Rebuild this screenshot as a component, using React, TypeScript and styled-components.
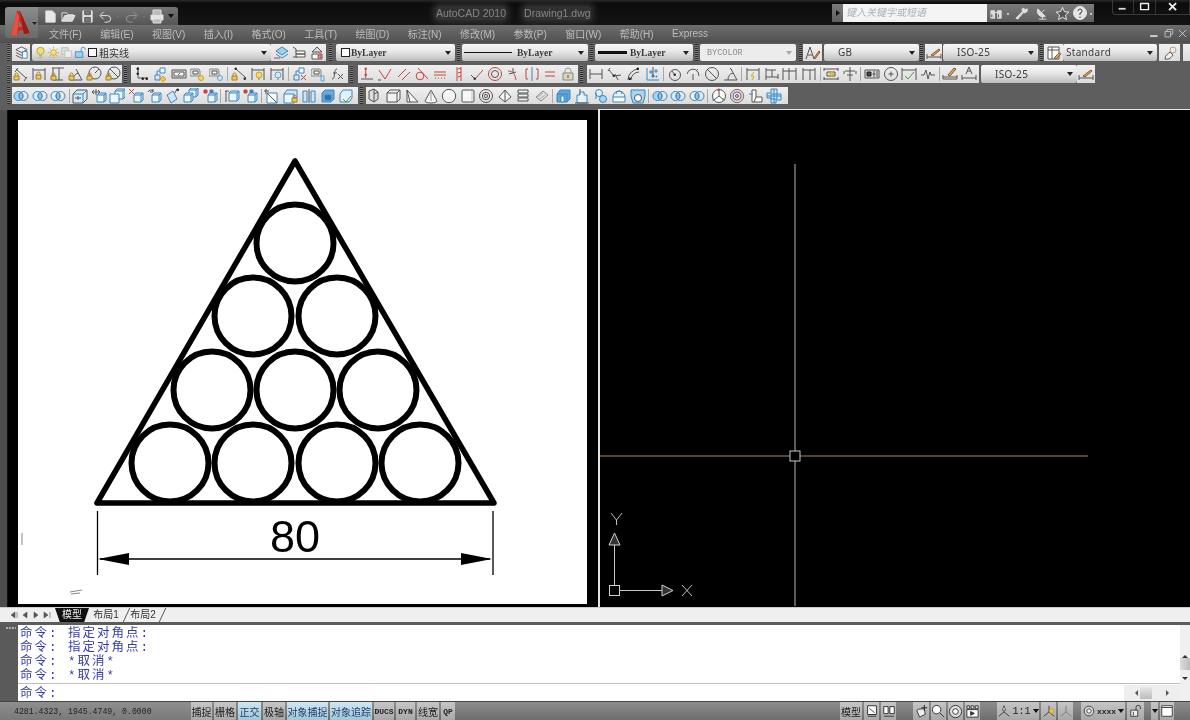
import React from "react";
import styled, { createGlobalStyle } from "styled-components";

const Global = createGlobalStyle`
  html, body { margin: 0; padding: 0; background: #000; }
  body { width: 1190px; height: 720px; overflow: hidden; font-family: "Liberation Sans", "Noto Sans CJK SC", sans-serif; }
`;

type P = [string, string, string?];
const dk = "#555", bl = "#3a86c0", rd = "#c8453c", yw = "#a87f24", gn = "#4aa03c", lb = "#cfe6f7";
const C = (x: number, y: number, r: number) => `M${x - r} ${y}a${r} ${r} 0 1 0 ${2 * r} 0a${r} ${r} 0 1 0 ${-2 * r} 0z`;
const lock = (x: number, y: number): P[] => [[yw, `M${x + 1} ${y}v-1.5a1.5 1.5 0 0 1 3 0v1.5`], [yw, `M${x} ${y}h5v4h-5z`, "#ecc862"]];
const box = (x: number, y: number, s = 7): P[] => [[bl, `M${x} ${y}l2-2h${s}v${s}l-2 2`, lb], [bl, `M${x} ${y}h${s}v${s}h-${s}zM${x + s} ${y}l2-2`, "#eef7fd"]];
const rings = (f: string): P[] => [[bl, C(5.5, 8, 4.5), f], [bl, C(10.5, 8, 4.5), "none"], [bl, "M8 4.3a4.5 4.5 0 0 1 0 7.4a4.5 4.5 0 0 1 0-7.4z", "#8cc4ea"]];
const dots = (a: [number, number][], col = "#333"): P => [col, a.map(([x, y]) => `M${x} ${y}h1.4v1.4h-1.4z`).join(""), col];
const ruler = (x: number): P[] => [["#888", `M${x} 3h8l1 2v5h-10v-5z`, "#ddd"], [dk, `M${x + 2} 5h5v3h-5z`, "#fff"]];

const r2a: P[][] = [
  [[dk, "M3 3l10 9M2 6l3-4M11 15l3-4"], ...lock(1, 10)],
  [[dk, "M2 2v12M14 2v12M2 4h12"], ...lock(5, 9)],
  [[dk, "M2 2h12M9 2v12M3 14h10M3 2v10"], ...lock(1, 10)],
  [[dk, "M8 3l6 11M2 14h12M5 14a8 8 0 0 1 5-7"], ...lock(1, 10)],
  [[dk, C(9, 7, 6)], [dk, "M9 7l4-4"], ...lock(1, 10)],
  [[dk, C(9, 7, 6)], [dk, "M5 3l8 8"], ...lock(1, 10)],
];
const r2b: (P[] | null)[] = [
  [[dk, "M5 1v11h10"], dots([[4, 2], [4, 7], [9, 12], [13, 12]], "#222"), [rd, "M4 5h2"]],
  [[bl, "M3 9h5v5h-5z"], [bl, "M8 2h5v5h-5z", "#fff"], [bl, "M5 9v-4h3"], ["#d9a21f", "M11 10l3 3-3 3-3-3z", "#f0c54a"]],
  [[dk, "M1 4h14v8h-14z", "#ddd"], [dk, "M3 6h10v4h-10z", "#fff"], [dk, "M9 7l-2 2"]],
  [...ruler(1), ["#c9a22c", C(11, 12, 2.5), "#f3d766"]],
  [...ruler(1), ["#6aa0c8", C(11, 12, 2.5), "#cfe6f7"]],
  null,
  [[dk, "M5 3l10 9"], dots([[4, 2], [13, 12]]), ...lock(1, 10)],
  [[dk, "M2 2v12M14 2v12M2 4h12"], ["#c9a22c", C(9, 9, 3), "#f5da60"], ["#888", "M8 13h2"]],
  [[dk, "M2 2v12M14 2v12M2 4h12"], ["#6aa0c8", C(9, 9, 3), "#d3e8f7"], ["#888", "M8 13h2"]],
  null,
  [[bl, "M2 9h5v5h-5z"], [bl, "M7 2h5v5h-5z", "#fff"], [bl, "M4 9v-4h3"], [rd, "M9 9l5 5M14 9l-5 5"]],
  [...ruler(1), ["#6aa0c8", "M10 10h3v5h-3z", "#cfe6f7"]],
  [[dk, "M7 3c-2 0-2 2-2.500 5s-.5 5-2.500 5M3 7h4M8 8l5 5M13 8l-5 5"]],
];
const r2c: P[][] = [
  [[dk, "M2 13h12"], dots([[6, 2], [6, 8]], rd), [rd, "M6.700 4v8"]],
  [[rd, "M2 4l6 9 6-10"], [dk, "M1 14h3"]],
  [[rd, "M2 11l8-8M6 14l8-8"]],
  [[rd, C(6, 10, 3.800)], [rd, "M4 2l10 11"]],
  [[rd, "M2 6h12M2 9h12"], [rd, "M3 12h1M6 12h1M9 12h1M12 12h1"]],
  [[rd, "M6 1v14M10 1v14M7 3l3-1M7 7l3-1M7 11l3-1"]],
  [[dk, "M6 13l-4-4"], [rd, "M6 13l8-9"], dots([[5, 12]])],
  [[rd, C(8, 8, 6.500)], [dk, C(8, 8, 3.500)]],
  [[rd, "M2 5c5 0 7 3 8 9"], [dk, "M7 2v4M3 8l7-2"]],
  [[rd, "M4 3h-2v10h2M12 3h2v10h-2"], [bl, "M8 1v14"]],
  [[rd, "M3 6h10M3 10h10"]],
  [["#999", "M5 7v-2a3 3 0 0 1 6 0v2"], ["#888", "M3 7h10v7h-10z", "#ddd5b8"], [dk, "M8 9v3"]],
];
const r2d: (P[] | null)[] = [
  [[dk, "M2 3v10M14 3v10M2 8h12"]],
  [[dk, "M2 4l5 6 7-1"], [dk, "M3 2l-2 3M8 8l3 6"], dots([[6, 9]])],
  [[dk, "M2 14a11 11 0 0 1 11-11"], [dk, "M5 14a8 8 0 0 1 8-8"], dots([[3, 12], [11, 2]], "#222")],
  [[bl, "M3 2v12h12"], [bl, "M6 5h2v2h-2zM11 4h2v2h-2zM8 9h2v2h-2zM12 10h1v1h-1z"], [dk, "M9 1v10"]],
  null,
  [[dk, C(8, 9, 5.500)], [dk, "M8 9l-3-4"], dots([[7, 8]])],
  [[dk, "M2 8a6 6 0 0 1 11-2l1 4"], [dk, "M8 8v6M11 5l2-2"]],
  [[dk, C(8, 8, 6.500)], [dk, "M3 3l10 10"]],
  [[dk, "M1 14h13M8 3l6 11M5 14a7 7 0 0 1 5-7M7 2l2 2"]],
  null,
  [[dk, "M2 2v12M14 2v12M2 4h12"], ["#d9a21f", "M9 6l-3 4h3l-2 4", "none"]],
  [[dk, "M2 2v12M2 4h10M2 11h12M14 8v5M8 4v7"]],
  [[dk, "M1 2v12M7 2v12M14 2v12M1 5h13"]],
  [[dk, "M2 2v12M14 2v12M2 4h12M9 4v10"]],
  null,
  [[dk, "M1 2v3M15 2v3M1 14v-3M15 14v-3M1 3h14M1 13h14M4 6h8v4h-8z"], ["#c9a22c", "M7 6h3v4h-3z", "#f0c54a"]],
  [[dk, "M8 1v14M3 5h10M5 9h6M2 5v3M14 5v3"]],
  null,
  [[dk, "M1 4h14v8h-14z", "#ddd"], ["#222", "M3 6h4v4h-4z", "#444"], [dk, "M10 5v6M8.500 8h3M13 5v6"]],
  [[dk, C(8, 8, 6.500)], [dk, "M8 5.500v5M5.500 8h5"]],
  [[dk, "M1 2v12M15 2v12M1 4h14"], [gn, "M4 10l3 3 6-7", "none"]],
  [[dk, "M1 9h3l2-5 2 9 2-7 1 3h4"]],
  null,
  [[dk, "M1 9v4h14v-4M1 11h14"], ["#8a5a26", "M6 9l6-7 2 1-6 7z", "#d7a76c"]],
  [[dk, "M1 9v5M15 9v5M1 12h14"], [dk, "M5 8l3-7 3 7M6 5h4"]],
  [[dk, "M2 2v12M14 2v12M2 4h12M7 9h5v4h-5z"], [bl, "M8 10l3 2"]],
];

const r3a: (P[] | null)[] = [
  rings("#a9d4f2"), rings("#d8ebf8"), rings("#e8f2f8"), null,
  [[dk, "M1 6l4-4h10v9l-4 4h-10z", "#d5ebfa"], [bl, "M1 6h10v9M11 6l4-4"], [dk, "M3 10h6M6 8v4"]],
  [[dk, "M5 1v6M2 4h6M3 2l-2 2 2 2M7 2l2 2-2 2"], ...box(6, 7)],
  [...box(6, 3, 8), [bl, "M1 6h9v9h-9z", "#eef7fd"]],
  [[rd, "M1 1l5 5M6 1l-5 5"], ...box(6, 7)],
  [[dk, "M2 4a3 3 0 0 1 5-1M7 1v3h-3"], ...box(6, 7)],
  [[bl, "M2 7l6-4 4 8-6 4z", lb], [dk, "M12 1l-2 4M12 1l2 2"], dots([[12, 1]])],
  [...box(6, 2, 7), ...box(1, 7, 7)],
  [[rd, "M2 2h3v3h-3z", rd], [bl, "M8 2h3v3h-3z", bl], ...box(6, 7)],
  null,
  [[dk, "M2 3v11M1 3h4"], ...box(5, 5, 8)],
  [[rd, "M2 2h3v3h-3z", rd], [bl, "M8 2h3v3h-3z", bl], ...box(6, 7)],
  null,
  [[dk, "M2 1v5M0 3h5"], [bl, "M3 5h10v10h-10z", "#fff"], [dk, "M3 5l10 10"]],
  [[bl, "M1 6l3-4h10v8h-3", lb], [bl, "M1 6h10v9h-10z", "#eef7fd"], ...lock(9, 10)],
  [[bl, "M2 3h4v11h-4z", lb], [bl, "M10 3h4v11h-4z", lb], [dk, "M8 1v14"]],
  [[bl, "M2 5l3-3h9v9l-3 3h-9z", "#6aa8d8"], [bl, "M5 7h6v5h-6z", "#2f6fa8"]],
  [[bl, "M5 2h9v8l-3 4h-9v-8z", "#e4f2fc"], [gn, "M5 11l3 3 5-6"]],
];
const r3b: (P[] | null)[] = [
  [[dk, "M2 3l5-2 4 3v7l-4 3-5-3z", "#ddd"], [dk, "M7 1v13M11 4l-4 2"]],
  [[dk, "M1 5l3-3h10v9l-3 3h-10z", "#f2f2f2"], [dk, "M1 5h10v9M11 5l3-3"]],
  [[dk, "M3 2l11 12h-11z", "#f6f6f6"], [dk, "M3 2l3 12"]],
  [[dk, "M8 2l6 11a6 2 0 0 1-12 0z", "#f6f6f6"], ["#999", "M8 2v11"]],
  [[dk, C(8, 8, 6.700), "#f4f4f4"], ["#fff", C(6, 6, 2), "#fff"]],
  [[dk, "M3 2h10a1 1 0 0 1 1 1v10a1 1 0 0 1-1 1h-10a1 1 0 0 1-1-1v-10a1 1 0 0 1 1-1z", "#f7f7f7"], ["#bbb", "M12 3v10"]],
  [[dk, C(8, 8, 6.500)], [dk, C(8, 8, 3.700), "#ddd"], [dk, C(8, 8, 1.500), "#fff"]],
  [[dk, "M8 2l6 7-6 5-6-5z", "#f4f4f4"], [dk, "M8 2v12"]],
  [[dk, "M3 2h10v3h-10zM3 6h10v3h-10zM3 10h10v3h-10z", "#eee"]],
  [["#888", "M2 9l7-6 5 4-7 6z", "#e2e2e2"], ["#aaa", "M4 9l5-4M6 11l5-4"]],
  null,
  [[bl, "M1 6l3-4h10v9l-3 3h-10z", "#5ea7dc"], [bl, "M5 8h3v6h-3z", "#fff"], [bl, "M1 6h10v8"]],
  [[dk, "M6 1v6"], [bl, "M3 7h3v-3h4v3h3v8h-10z", "#e4f2fc"], [dk, "M1 15h14"]],
  [[bl, C(6, 5, 3.500), "#e4f2fc"], [bl, C(10, 11, 3.500), "#a9d4f2"], [bl, "M3 5v6"]],
  [[bl, "M2 9a6 6 0 0 1 12 0", "#e4f2fc"], [bl, "M2 9h12v5h-12z", "#fff"], [bl, "M5 6a3 3 0 0 1 6 0"]],
  [[bl, "M1 2h14v6l-2 7h-10l-2-7z", "#a9d4f2"], [dk, C(8, 10, 3.500), "#fff"]],
  null,
  rings("#a9d4f2"), rings("#d8ebf8"), rings("#e8f2f8"), null,
  [[dk, C(8, 8, 6.500), "#fff"], [dk, "M8 8v-6M8 8l-5 4M8 8l5 4"], dots([[7, 1]], rd), dots([[2, 11]], bl), dots([[12, 11]], gn)],
  [["#a06a6a", C(8, 8, 6.700), "#e6c9c0"], [bl, C(8, 8, 4), "#cfe6f7"], [rd, C(8, 8, 1.500), "#f2b8a8"]],
  [[dk, "M4 2h4v7h6v5h-10z", "#fff"], [bl, "M1 6h4"], [dk, "M8 9l-2 5"]],
  [[bl, "M5 1h6v5h4v6h-5v3h-5v-5h-4v-5h4z", lb], [bl, "M5 6h6v5h-6zM8 1v14M1 8h14"]],
];

const Icon = ({ d, size = 16, sw = 1 }: { d: P[]; size?: number; sw?: number }) => (
  <svg width={size} height={size} viewBox="0 0 16 16">
    {d.map(([s, p, f], i) => <path key={i} d={p} stroke={s} fill={f ?? "none"} strokeWidth={sw} strokeLinejoin="round" />)}
  </svg>
);

const Root = styled.div`
  width: 1190px; height: 720px; display: flex; flex-direction: column; overflow: hidden;
  position: relative; filter: blur(0.4px); background: #5a5a5a;
`;
const TitleBar = styled.header`
  height: 25px; box-sizing: border-box; display: flex; align-items: flex-start;
  background: linear-gradient(#2a2a2a 0, #0c0c0c 3px, #141414 100%);
`;
const AppButton = styled.div`
  position: absolute; left: 5px; top: 7px; width: 33px; height: 31px; border-radius: 3px 0 0 3px;
  background: linear-gradient(#8c8c8c, #6a6a6a); display: flex; align-items: center; justify-content: center;
`;
const Qat = styled.div`
  margin-left: 38px; margin-top: 7px; width: 140px; height: 18px; box-sizing: border-box; padding-left: 3px; flex: none;
  display: flex; align-items: center; background: linear-gradient(#757575, #555);
  border-radius: 0 3px 0 0;
`;
const QatItem = styled.span<{ $w: number }>`
  width: ${(p) => p.$w}px; height: 18px; flex: none; display: flex; align-items: center; justify-content: center;
`;
const TitleText = styled.div`
  margin-left: 258px; margin-top: 6px; display: flex; gap: 18px; font-size: 10.500px; line-height: 14px; color: #858585;
  font-family: "Liberation Sans", sans-serif; flex: none;
  span { background: rgba(90, 90, 90, 0.45); box-shadow: 0 0 6px 3px rgba(90, 90, 90, 0.45); border-radius: 3px; }
`;
const SearchBox = styled.div`
  margin-left: auto; margin-top: 4px; width: 262px; height: 18px; box-sizing: border-box; background: linear-gradient(#7a7a7a, #606060);
  display: flex; align-items: center; padding-left: 4px; color: #eee; flex: none;
`;
const RightTri = styled.span`
  width: 0; height: 0; border-left: 4px solid #111; border-top: 3.500px solid transparent; border-bottom: 3.500px solid transparent; margin-right: 3px; flex: none;
`;
const SearchInput = styled.div`
  width: 144px; height: 18px; flex: none; background: #f4f4f4; color: #a8b0b8; font-size: 10px; line-height: 18px; padding-left: 3px; box-sizing: border-box; font-style: italic;
`;
const SearchIcon = styled.span<{ $w: number }>`
  width: ${(p) => p.$w}px; flex: none; display: flex; align-items: center; justify-content: center; font-size: 7px; color: #ddd;
`;
const WinControls = styled.div`
  margin-left: 18px; width: 78px; height: 15px; display: flex; flex: none; border: 1px solid #3a3a3a; border-top: 0; border-right: 0; border-radius: 0 0 0 4px; box-sizing: border-box;
`;
const WinBtn = styled.span<{ $w: number }>`
  width: ${(p) => p.$w}px; display: flex; align-items: center; justify-content: center; color: #ddd; border-right: 1px solid #333; box-sizing: border-box;
`;
const MenuBar = styled.nav`
  height: 18px; padding-left: 49px; padding-right: 2px; padding-bottom: 1px; box-sizing: border-box; display: flex; align-items: center; gap: 18.400px; font-size: 10px; color: #bcbcbc;
  background: linear-gradient(#6e6e6e, #4f4f4f);
`;
const MenuEnd = styled.span`
  margin-left: auto; display: flex; gap: 3px; align-items: center;
`;
const ToolArea = styled.section`
  height: 67px; box-sizing: border-box; padding-top: 1px; background: #5e5e5e; display: flex; flex-direction: column; gap: 4px;
`;
const ToolRow = styled.div<{ $h: number }>`
  height: ${(p) => p.$h}px; padding-left: 5px; display: flex; align-items: stretch;
`;
const Grip = styled.span<{ $l?: number; $r?: number }>`
  width: 3px; margin: 0 ${(p) => p.$r ?? 2}px 0 ${(p) => p.$l ?? 2}px;
  background: repeating-linear-gradient(0deg, #2e2e2e 0 1px, #7c7c7c 1px 2px);
`;
const Panel = styled.div<{ $w: number; $ml?: number }>`
  width: ${(p) => p.$w}px; margin-left: ${(p) => p.$ml ?? 0}px; box-sizing: border-box; display: flex; align-items: center; flex: none;
  background: linear-gradient(#f0f0f0, #dcdcdc);
`;
const Slot = styled.span<{ $p: number }>`
  width: ${(p) => p.$p}px; flex: none; display: flex; align-items: center; justify-content: center;
`;
const Sep = styled.span`
  width: 1px; height: 14px; margin: 0 1.250px; background: #a8a8a8; flex: none;
`;
const Combo = styled.div<{ $w: number; $ml?: number; $pl?: number; $muted?: boolean; $gap?: number }>`
  width: ${(p) => p.$w}px; margin-left: ${(p) => p.$ml ?? 0}px; padding-left: ${(p) => p.$pl ?? 4}px; box-sizing: border-box; flex: none;
  position: relative; display: flex; align-items: center; gap: ${(p) => p.$gap ?? 0}px; border-radius: 2px;
  background: ${(p) => (p.$muted ? "#ececec" : "linear-gradient(#f8f8f8 0%, #e6e6e6 45%, #bdbdbd 100%)")};
  color: ${(p) => (p.$muted ? "#8f8f8f" : "#333")};
  font-size: 10.500px;
  &::after {
    content: ""; position: absolute; right: 4px; top: 50%; margin-top: -2px;
    border-top: 4px solid ${(p) => (p.$muted ? "#aaa" : "#222")}; border-left: 3.500px solid transparent; border-right: 3.500px solid transparent;
  }
`;
const SerifLabel = styled.span`
  font-family: "Liberation Serif", serif; font-weight: bold; font-size: 9.500px; color: #3a3a3a;
`;
const MonoLabel = styled.span`
  font-family: "Liberation Mono", monospace; font-size: 8.500px; color: #8f8f8f;
`;
const ComboText = styled.span`
  font-family: "Noto Sans", sans-serif; font-size: 10px; line-height: 13px; color: #3c3c3c; letter-spacing: 0.300px;
`;
const LayerName = styled.span`
  font-size: 10px; color: #333; margin-left: 2px;
`;
const LineSample = styled.span<{ $w: number; $t: number }>`
  width: ${(p) => p.$w}px; height: ${(p) => p.$t}px; background: #111; flex: none;
`;
const ColorSquare = styled.span<{ $ml?: number }>`
  width: 7px; height: 7px; border: 1px solid #222; background: #fff; flex: none; margin-left: ${(p) => p.$ml ?? 0}px;
`;
const Viewports = styled.main`
  height: 497px; display: flex; background: #000; padding-left: 8px; position: relative;
`;
const Gutter = styled.span`
  position: absolute; left: 0; top: 0; bottom: 0; width: 8px; background: #4d4d4d; border-right: 1px solid #111; box-sizing: border-box;
`;
const LeftView = styled.div`
  width: 590px; box-sizing: border-box; padding: 10px 11px 0 10px; background: #000; flex: none;
`;
const RightView = styled.div`
  flex: 1; background: #000; border-left: 2px solid #e4e4e4; border-top: 1px solid #e4e4e4; margin-top: -1px; overflow: hidden;
`;
const Sheet = styled.svg`
  display: block; background: #fff;
`;
const ModelSpace = styled.svg`
  display: block;
`;
const TabBar = styled.div`
  height: 15px; display: flex; align-items: center; background: #efefef; padding-left: 8px; font-size: 10px; color: #333; border-top: 1px solid #ccc; box-sizing: border-box;
`;
const NavBtn = styled.span`
  width: 11px; height: 11px; display: flex; align-items: center; justify-content: center; flex: none;
`;
const Tab = styled.span<{ $active?: boolean; $w: number; $ml?: number }>`
  width: ${(p) => p.$w}px; margin-left: ${(p) => p.$ml ?? 0}px; flex: none; text-align: center; position: relative;
  color: ${(p) => (p.$active ? "#eee" : "#333")}; background: ${(p) => (p.$active ? "#111" : "transparent")};
  clip-path: ${(p) => (p.$active ? "polygon(0 0, 100% 0, 86% 100%, 14% 100%)" : "none")};
  line-height: 14px;
`;
const Slash = styled.span`
  width: 1px; height: 14px; background: #555; transform: skewX(-25deg); flex: none; margin: 0 1px 0 4px;
`;
const CmdDivider = styled.div`
  height: 3px; background: #5c5c5c;
`;
const Cmd = styled.section`
  height: 76px; display: flex; background: #fff;
`;
const CmdGrip = styled.div`
  width: 18px; background: #5a5a5a; flex: none; position: relative;
  &::before { content: ""; position: absolute; top: 2px; left: 6px; width: 10px; height: 2px; background: repeating-linear-gradient(90deg, #aaa 0 2px, #666 2px 3px); }
`;
const CmdMain = styled.div`
  flex: 1; display: flex; flex-direction: column; min-width: 0;
`;
const History = styled.div`
  height: 59px; border-bottom: 1px solid #bdbdbd; box-sizing: border-box; padding: 1.500px 0 0 2px; flex: none;
`;
const CmdLine = styled.div`
  height: 14.300px; line-height: 14.300px; display: flex; font-size: 12.500px; letter-spacing: 2px; color: #363ba6;
  font-family: "Liberation Mono", "Noto Sans CJK SC", monospace;
`;
const Prompt = styled.span`
  width: 48px; flex: none;
`;
const CmdInput = styled.div`
  flex: 1; display: flex; align-items: center; padding: 0 0 0 2px;
`;
const CmdInputLine = styled(CmdLine)`
  margin-top: 3px;
`;
const HScroll = styled.div`
  margin-left: auto; width: 56px; height: 16px; background: #eee; position: relative; display: flex; align-items: center; justify-content: space-between; padding: 0 10px; box-sizing: border-box; color: #444;
`;
const HThumb = styled.span`
  position: absolute; left: 16px; top: 2px; width: 12px; height: 12px; background: linear-gradient(#e8e8e8, #bbb); border-radius: 1px;
`;
const VScroll = styled.div`
  width: 10px; flex: none; background: #f0f0f0; position: relative; display: flex; flex-direction: column; justify-content: space-between; align-items: center; padding: 29px 0 20px; box-sizing: border-box;
`;
const VThumb = styled.span`
  position: absolute; left: 0; top: 33px; width: 10px; height: 12px; background: linear-gradient(90deg, #ddd, #bbb);
`;
const Status = styled.footer`
  height: 19px; display: flex; align-items: stretch; background: linear-gradient(#8d8d8d, #6d6d6d); font-size: 10px; color: #222; border-top: 1px solid #444; box-sizing: border-box;
`;
const Coords = styled.div`
  width: 191px; flex: none; box-sizing: border-box; padding-left: 14px; display: flex; align-items: center;
  font-family: "Liberation Mono", monospace; font-size: 8.200px; color: #222; background: linear-gradient(#8e8e8e, #7a7a7a);
`;
const SBtn = styled.span<{ $w: number; $on?: boolean; $mono?: boolean; $plain?: boolean }>`
  width: ${(p) => p.$w}px; flex: none; display: flex; align-items: center; justify-content: center; gap: 1px;
  margin-right: 2px;
  background: ${(p) => (p.$on ? "linear-gradient(#cfe6f2, #9ec6da)" : "linear-gradient(#c6c6c6, #a8a8a8)")};
  font-family: ${(p) => (p.$mono ? '"Liberation Mono", monospace' : '"Noto Sans CJK SC", sans-serif')};
  font-size: ${(p) => (p.$mono ? "8px" : "10px")};
  font-weight: ${(p) => (p.$mono && !p.$plain ? "bold" : "normal")};
  color: ${(p) => (p.$on ? "#223a66" : "#222")};
`;
const ScaleBtn = styled(SBtn)`
  font-size: 10px;
`;
const SDarkGap = styled.span<{ $w: number }>`
  width: ${(p) => p.$w}px; flex: none;
`;
const ArrowDown = styled.span`
  border-top: 4px solid #111; border-left: 3.500px solid transparent; border-right: 3.500px solid transparent; margin-left: 1px;
`;
const SmallTri = styled.svg`
  display: block;
`;

const Group = ({ items, p }: { items: (P[] | null)[]; p: number }) => (
  <>
    {items.map((d, i) => d ? <Slot key={i} $p={p}><Icon d={d} size={16} /></Slot> : <Sep key={i} />)}
  </>
);

const white = "#e8e8e8";
const qat: { w: number; d: P[] }[] = [
  { w: 18, d: [["#ddd", "M3 2h7l3 3v9h-10z", "#e8e8e8"]] },
  { w: 19, d: [["#ddd", "M1 13v-9h5l1 2h6v2", "none"], [white, "M1 13l3-6h11l-3 6z", "#d8d8d8"]] },
  { w: 18, d: [["#ddd", "M3 2h10v12h-10z", "#e4e4e4"], ["#555", "M5 2h6v4h-6zM5 9h6v5h-6z", "#777"]] },
  { w: 18, d: [[white, "M3 7h7a3.500 3.500 0 0 1 0 7h-3", "none"], [white, "M6 3l-4 4 4 4", "none"]] },
  { w: 8, d: [["#bbb", "M7 8h2", "none"]] },
  { w: 18, d: [["#999", "M13 7h-7a3.500 3.500 0 0 0 0 7h3", "none"], ["#999", "M10 3l4 4-4 4", "none"]] },
  { w: 8, d: [["#bbb", "M7 8h2", "none"]] },
];

const Triangle = () => (
  <Sheet width="569" height="484" viewBox="18 120 569 484">
    <path d="M295 161L97 503H494Z" fill="none" stroke="#000" strokeWidth="5.500" strokeLinejoin="round" />
    {[[170, 463], [253, 463], [337, 463], [420, 463], [212, 390], [295, 390], [378, 390], [253, 316], [337, 316], [295, 243]].map(([x, y]) => (
      <circle key={`${x}-${y}`} cx={x} cy={y} r="38.500" fill="#fff" stroke="#000" strokeWidth="6" />
    ))}
    <path d="M97.500 511V575M493 511V575M100 559H490" stroke="#000" strokeWidth="1.300" fill="none" />
    <path d="M98 559L129 553V565ZM492 559L461 553V565Z" fill="#000" />
    <text x="295" y="552" textAnchor="middle" fontFamily="Liberation Sans" fontSize="45" fill="#000">80</text>
    <path d="M22 533V545M70 592L82 590M71 594L80 593" stroke="#888" strokeWidth="1" fill="none" />
  </Sheet>
);

const Crosshair = () => (
  <ModelSpace width="590" height="497" viewBox="600 110 590 497">
    <path d="M795 164V451M795 461V606" stroke="#b8b8b8" strokeWidth="1" fill="none" />
    <path d="M600 456H790M800 456H1088" stroke="#a8866a" strokeWidth="1" fill="none" />
    <rect x="790" y="451" width="10" height="10" fill="none" stroke="#c8c8c8" />
    <rect x="609.500" y="585.500" width="10" height="10" fill="none" stroke="#d0d0d0" />
    <path d="M614.500 585V545M620 590.500H662" stroke="#c8c8c8" fill="none" />
    <path d="M614.500 533L620 545H609Z" fill="#333" stroke="#d0d0d0" />
    <path d="M673 590.500L662 585V596Z" fill="#333" stroke="#d0d0d0" />
    <path d="M611 513L616.500 520L622 513M616.500 520V525" stroke="#c0c0c0" fill="none" />
    <path d="M682 585L692 596M692 585L682 596" stroke="#c0c0c0" fill="none" />
  </ModelSpace>
);

export default function App() {
  return (
    <Root>
      <Global />
      <TitleBar>
        <Qat>
          {qat.map((q, i) => <QatItem key={i} $w={q.w}><Icon d={q.d} size={15} /></QatItem>)}
          <QatItem $w={18}><Icon size={16} d={[["#e0e0e0", "M2 7h12v5h-12z", "#e4e4e4"], ["#e0e0e0", "M4 7v-5h8v5M4 11h8v4h-8z", "#bbb"]]} /></QatItem>
          <QatItem $w={9}><ArrowDown /></QatItem>
        </Qat>
        <TitleText><span>AutoCAD 2010</span><span>Drawing1.dwg</span></TitleText>
        <SearchBox>
          <RightTri />
          <SearchInput>键入关键字或短语</SearchInput>
          <SearchIcon $w={18}><Icon size={15} d={[["#ddd", "M2 5h4v8h-4zM9 5h4v8h-4zM6 7h3", "#ddd"], ["#444", "M3 9v3M10 9v3"]]} /></SearchIcon>
          <SearchIcon $w={6}>▪</SearchIcon>
          <SearchIcon $w={20}><Icon size={15} d={[["#ddd", "M2 13l7-7a3 3 0 0 1 1-4l2 2 2-1a3 3 0 0 1-4 4l-6 7z", "#ddd"]]} /></SearchIcon>
          <SearchIcon $w={22}><Icon size={15} d={[["#ddd", "M3 3a6 6 0 0 0 8 8z", "#ddd"], ["#ddd", "M7 7l3-3M4 14h8M8 10v4"]]} /></SearchIcon>
          <SearchIcon $w={18}><Icon size={15} d={[["#eee", "M8 1.500l2 4.500 4.800.5-3.600 3.200 1 4.800-4.200-2.500-4.200 2.500 1-4.800L1.200 6.500 6 6z", "#555"]]} /></SearchIcon>
          <SearchIcon $w={17}><Icon size={16} d={[["#e4e4e4", C(8, 8, 6.500), "#e4e4e4"], ["#444", "M6 6a2 2 0 1 1 2 2v2M8 11.500v1.500"]]} /></SearchIcon>
          <SearchIcon $w={6}>▪</SearchIcon>
        </SearchBox>
        <WinControls>
          <WinBtn $w={21}><Icon size={14} sw={2} d={[["#ddd", "M3 10h8"]]} /></WinBtn>
          <WinBtn $w={23}><Icon size={14} sw={1.600} d={[["#eee", "M3 4h9v7h-9z"]]} /></WinBtn>
          <WinBtn $w={34}><Icon size={14} sw={2.200} d={[["#eee", "M3.500 3.500l8 8M11.500 3.500l-8 8"]]} /></WinBtn>
        </WinControls>
      </TitleBar>

      <AppButton>
        <svg width="30" height="30" viewBox="0 0 30 30">
          <g transform="translate(1 0) scale(.8 1)">
            <path d="M11 3L4 27L11 28L13 23L19 22L20 26L27 25L15 3Z" fill="#c92a20" />
            <path d="M11 3L4 27L11 28L14 9Z" fill="#e8503f" />
            <path d="M14 13L13 19L18 18.500Z" fill="#7d7d7d" />
            <path d="M20 26L27 25L15 3L19 22Z" fill="#9c1b14" />
          </g>
          <path d="M25 14h5l-2.500 3z" fill="#222" />
        </svg>
      </AppButton>

      <MenuBar>
        {["文件(F)", "编辑(E)", "视图(V)", "插入(I)", "格式(O)", "工具(T)", "绘图(D)", "标注(N)", "修改(M)", "参数(P)", "窗口(W)", "帮助(H)", "Express"].map((m) => <span key={m}>{m}</span>)}
        <MenuEnd>
          <Icon size={11} d={[["#ddd", "M2 11h10v1.500h-10z", "#ddd"]]} />
          <Icon size={11} d={[["#ddd", "M3 5h8v8h-8zM6 5v-3h8v7h-3"]]} />
          <Icon size={11} d={[["#eee", "M3 3l10 10M13 3l-10 10"]]} />
        </MenuEnd>
      </MenuBar>

      <ToolArea>
        <ToolRow $h={17}>
          <Grip />
          <Panel $w={18}><Slot $p={18}><Icon size={15} d={[[dk, "M2 5l6-3 6 3-6 3z", "#eee"], [dk, "M2 8l6 3 6-3M2 11l6 3 6-3"], [bl, "M9 7h5v7h-5z", "#fff"]]} /></Slot></Panel>
          <Combo $w={239} $ml={2} $pl={2}>
            <Icon size={13} d={[["#b89a26", C(8, 6, 4.500), "#f2df70"], ["#999", "M6 12h4M6.500 14h3"]]} />
            <Icon size={13} d={[["#c9a22c", C(8, 8, 3.500), "#f6e07a"], ["#c9a22c", "M8 1v2M8 13v2M1 8h2M13 8h2M3 3l1.500 1.500M11.500 11.500L13 13M13 3l-1.500 1.500M3 13l1.500-1.500"]]} />
            <Icon size={13} d={[["#bbb", "M2 2h8v8h-8z", "#ddd"], ["#bbb", "M6 6h8v8h-8z", "#eee"]]} />
            <Icon size={13} d={[[bl, "M10 7v-3a2.500 2.500 0 0 1 5 0v1"], [bl, "M3 7h9v7h-9z", "#9fd0f0"]]} />
            <ColorSquare $ml={2} />
            <LayerName>粗实线</LayerName>
          </Combo>
          <Panel $w={55}>
            <Slot $p={19}><Icon d={[[bl, "M3 6l6-4 6 4-6 4z", "#9fd0f0"], [bl, "M3 9l6 4 6-4"], ["#666", "M1 13h6"]]} /></Slot>
            <Slot $p={18}><Icon d={[[dk, "M2 2l3 2v3"], [dk, "M5 6h9v3h-9zM5 9h9v3h-9z", "#fff"], [dk, "M2 12h4"]]} /></Slot>
            <Slot $p={18}><Icon d={[[dk, "M3 7l5-5 5 5z", "#ddd"], [dk, "M3 9h10v5h-10z", "#fff"], [rd, "M9 10h3v3h-3z", "#e98"]]} /></Slot>
          </Panel>
          <Grip $l={3} $r={4} />
          <Combo $w={119} $pl={5} $gap={1}><ColorSquare /><SerifLabel>ByLayer</SerifLabel></Combo>
          <Grip />
          <Combo $w={126} $pl={2} $gap={5}><LineSample $w={48} $t={1} /><SerifLabel>ByLayer</SerifLabel></Combo>
          <Grip />
          <Combo $w={98} $pl={3} $gap={3}><LineSample $w={29} $t={3} /><SerifLabel>ByLayer</SerifLabel></Combo>
          <Grip />
          <Combo $w={96} $muted $pl={7}><MonoLabel>BYCOLOR</MonoLabel></Combo>
          <Grip $l={3} $r={1} />
          <Panel $w={19}><Slot $p={19}><Icon d={[[dk, "M1 14l4-12 4 12M3 10h4"], ["#8a5a26", "M9 13l5-7 1 1-5 7z", "#d7a76c"]]} /></Slot></Panel>
          <Combo $w={95} $ml={2} $pl={14}><ComboText>GB</ComboText></Combo>
          <Grip $l={1} />
          <Panel $w={17}><Slot $p={17}><Icon d={[[dk, "M1 9v5M15 9v5M1 12h14"], ["#8a5a26", "M5 10l8-6 1 1-7 6z", "#d7a76c"]]} /></Slot></Panel>
          <Combo $w={95} $ml={1} $pl={14}><ComboText>ISO-25</ComboText></Combo>
          <Grip $l={2} $r={1} />
          <Panel $w={19}><Slot $p={19}><Icon d={[[dk, "M2 2h11v12h-11z", "#fff"], [dk, "M2 5h11M6 2v12"], ["#8a5a26", "M8 13l5-5 2 1-5 5z", "#d7a76c"]]} /></Slot></Panel>
          <Combo $w={94} $pl={3}><ComboText>Standard</ComboText></Combo>
          <Panel $w={21} $ml={2}><Slot $p={21}><Icon d={[[dk, "M3 14c0-4 3-5 5-7l3 3c-2 2-3 5-8 4z", "#eee"], ["#c97", C(11, 5, 3)]]} /></Slot></Panel>
          <Panel $w={7} $ml={3} />
        </ToolRow>

        <ToolRow $h={18}>
          <Grip />
          <Panel $w={110}><Group items={r2a} p={18.300} /></Panel>
          <Grip $r={4} />
          <Panel $w={217}><Group items={r2b} p={19} /></Panel>
          <Grip $r={5} />
          <Panel $w={220}><Group items={r2c} p={18.300} /></Panel>
          <Grip $r={4} />
          <Panel $w={392}><Group items={r2d} p={18.700} /></Panel>
          <Combo $w={96} $ml={2} $pl={14}><ComboText>ISO-25</ComboText></Combo>
          <Panel $w={18}><Slot $p={18}><Icon d={[[dk, "M1 9v5M15 9v5M1 12h14"], ["#8a5a26", "M5 10l8-6 1 1-7 6z", "#d7a76c"]]} /></Slot></Panel>
        </ToolRow>

        <ToolRow $h={17}>
          <Grip />
          <Panel $w={346}><Group items={r3a} p={18.500} /></Panel>
          <Grip $r={3} />
          <Panel $w={422}><Group items={r3b} p={18.500} /></Panel>
        </ToolRow>
      </ToolArea>

      <Viewports>
        <Gutter />
        <LeftView><Triangle /></LeftView>
        <RightView><Crosshair /></RightView>
      </Viewports>

      <TabBar>
        {["M8 3v6M6 3L2 6l4 3z", "M7 3L3 6l4 3z", "M3 3l4 3-4 3z", "M2 3l4 3-4 3zM8 3v6"].map((d, i) => (
          <NavBtn key={i}><SmallTri width="10" height="12" viewBox="0 0 10 12"><path d={d} fill="#555" stroke="#555" strokeWidth=".6" /></SmallTri></NavBtn>
        ))}
        <Tab $active $w={34} $ml={3}>模型</Tab>
        <Tab $w={32} $ml={1}>布局1</Tab>
        <Slash />
        <Tab $w={30}>布局2</Tab>
        <Slash />
      </TabBar>
      <CmdDivider />
      <Cmd>
        <CmdGrip />
        <CmdMain>
          <History>
            <CmdLine><Prompt>命令:</Prompt>指定对角点:</CmdLine>
            <CmdLine><Prompt>命令:</Prompt>指定对角点:</CmdLine>
            <CmdLine><Prompt>命令:</Prompt>*取消*</CmdLine>
            <CmdLine><Prompt>命令:</Prompt>*取消*</CmdLine>
          </History>
          <CmdInput>
            <CmdInputLine><Prompt>命令:</Prompt></CmdInputLine>
            <HScroll>
              <SmallTri width="5" height="8" viewBox="0 0 5 8"><path d="M4 1L1 4l3 3z" fill="#555" /></SmallTri>
              <HThumb />
              <SmallTri width="5" height="8" viewBox="0 0 5 8"><path d="M1 1l3 3-3 3z" fill="#555" /></SmallTri>
            </HScroll>
          </CmdInput>
        </CmdMain>
        <VScroll>
          <SmallTri width="8" height="5" viewBox="0 0 8 5"><path d="M1 4l3-3 3 3z" fill="#333" /></SmallTri>
          <VThumb />
          <SmallTri width="8" height="5" viewBox="0 0 8 5"><path d="M1 1l3 3 3-3z" fill="#333" /></SmallTri>
        </VScroll>
      </Cmd>
      <Status>
        <Coords>4281.4323, 1945.4749, 0.0000</Coords>
        <SBtn $w={21}>捕捉</SBtn>
        <SBtn $w={22}>栅格</SBtn>
        <SBtn $w={23} $on>正交</SBtn>
        <SBtn $w={22}>极轴</SBtn>
        <SBtn $w={41} $on>对象捕捉</SBtn>
        <SBtn $w={42} $on>对象追踪</SBtn>
        <SBtn $w={20} $mono>DUCS</SBtn>
        <SBtn $w={19} $mono>DYN</SBtn>
        <SBtn $w={22}>线宽</SBtn>
        <SBtn $w={14} $mono>QP</SBtn>
        <SDarkGap $w={383} />
        <SBtn $w={22}>模型</SBtn>
        <SBtn $w={15}><Icon size={14} d={[["#222", "M3 2h10v10h-10z", "#fff"], ["#333", "M5 5l6 5M3 14h10"]]} /></SBtn>
        <SBtn $w={15}><Icon size={14} d={[["#222", "M2 3h5v8h-5zM9 3h5v8h-5z", "#fff"], ["#333", "M2 14h12"]]} /></SBtn>
        <SDarkGap $w={15} />
        <SBtn $w={16}><Icon size={15} d={[["#333", "M3 7c3-3 6-1 8-2l1 6-6 3z", "#eee"], ["#222", "M11 1v6M8 4h6"]]} /></SBtn>
        <SBtn $w={15}><Icon size={15} d={[["#333", C(6, 6, 4.500), "#fff"], ["#333", "M9.500 9.500L14 14"]]} /></SBtn>
        <SBtn $w={15}><Icon size={15} d={[["#333", C(8, 8, 6.500), "#ddd"], ["#333", C(8, 8, 3), "#fff"]]} /></SBtn>
        <SBtn $w={15}><Icon size={15} d={[["#333", "M2 6h12v8h-12z", "#fff"], ["#333", "M2 2h3v3h-3zM6.500 2h3v3h-3zM11 2h3v3h-3z", "#eee"], ["#333", "M6 8l4 2-4 2z", "#333"]]} /></SBtn>
        <SDarkGap $w={15} />
        <ScaleBtn $w={42} $mono $plain>
          <Icon size={14} d={[["#333", "M8 2v7M8 9l-6 5M8 9l6 5", "none"], ["#555", "M8 2l2 5h-4z", "#eee"]]} />1:1<ArrowDown />
        </ScaleBtn>
        <SBtn $w={15}><Icon size={14} d={[["#333", "M8 2v7M8 9l-6 5M8 9l6 5"], ["#c9a22c", C(11, 8, 2.500), "#f0c54a"]]} /></SBtn>
        <SBtn $w={15}><Icon size={14} d={[["#777", "M8 2v7M8 9l-6 5M8 9l6 5"]]} /></SBtn>
        <SDarkGap $w={6} />
        <SBtn $w={44} $mono>
          <Icon size={14} d={[["#333", C(8, 8, 5.500), "#ddd"], ["#333", C(8, 8, 2.500), "#fff"]]} />xxxx<ArrowDown />
        </SBtn>
        <SBtn $w={17}><Icon size={14} d={[["#333", "M2 7h8v7h-8z", "#eee"], ["#333", "M8 7v-3a2.500 2.500 0 0 1 5 0v2M5 9v4"]]} /></SBtn>
        <SDarkGap $w={5} />
        <SBtn $w={7}><ArrowDown /></SBtn>
        <SBtn $w={14}><Icon size={14} d={[["#333", "M2 2h12v12h-12z", "#fff"], ["#333", "M2 4h12"]]} /></SBtn>
      </Status>
    </Root>
  );
}
